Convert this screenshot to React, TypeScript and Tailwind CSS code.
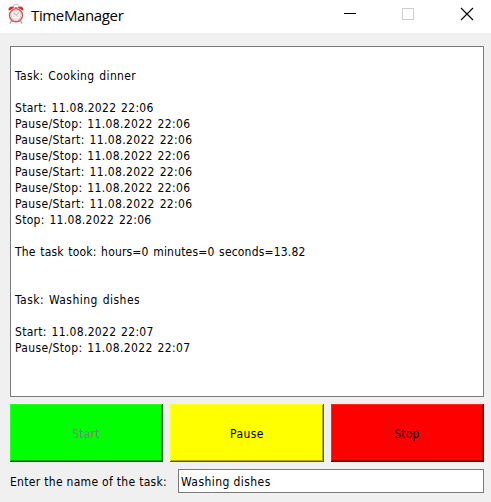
const LOG: { text: string; track: string }[] = [
  { text: '', track: '' },
  { text: 'Task: Cooking dinner', track: 'tracking-[0.36px]' },
  { text: '', track: '' },
  { text: 'Start: 11.08.2022 22:06', track: 'tracking-[0.3px]' },
  { text: 'Pause/Stop: 11.08.2022 22:06', track: 'tracking-[0.36px]' },
  { text: 'Pause/Start: 11.08.2022 22:06', track: 'tracking-[0.36px]' },
  { text: 'Pause/Stop: 11.08.2022 22:06', track: 'tracking-[0.36px]' },
  { text: 'Pause/Start: 11.08.2022 22:06', track: 'tracking-[0.36px]' },
  { text: 'Pause/Stop: 11.08.2022 22:06', track: 'tracking-[0.36px]' },
  { text: 'Pause/Start: 11.08.2022 22:06', track: 'tracking-[0.36px]' },
  { text: 'Stop: 11.08.2022 22:06', track: 'tracking-[0.3px]' },
  { text: '', track: '' },
  { text: 'The task took: hours=0 minutes=0 seconds=13.82', track: 'tracking-[0.18px]' },
  { text: '', track: '' },
  { text: '', track: '' },
  { text: 'Task: Washing dishes', track: 'tracking-[0.46px]' },
  { text: '', track: '' },
  { text: 'Start: 11.08.2022 22:07', track: 'tracking-[0.3px]' },
  { text: 'Pause/Stop: 11.08.2022 22:07', track: 'tracking-[0.36px]' },
];

function AlarmClock() {
  return (
    <svg width="16" height="20" viewBox="0 0 16 20" fill="none">
      <path d="m3.6 16.2-1.4 3M12.4 16.2l1.4 3" stroke="#aaa6a6" strokeWidth="1.3" strokeLinecap="round" />
      <path d="M4.8 1.8C5.8 0.1 10.2 0.1 11.2 1.8" stroke="#c4bcbc" strokeWidth="1" />
      <path d="M0.4 6C0.2 3.2 3 1.4 6.8 3L1.8 6.6Z" fill="#d2302c" />
      <path d="M15.6 6c0.2-2.8-2.6-4.6-6.4-3l5 3.6Z" fill="#d2302c" />
      <path d="M8 3v2" stroke="#b84a46" strokeWidth="1.4" />
      <circle cx="8" cy="11.3" r="6.5" fill="#efeded" stroke="#cf5f5b" strokeWidth="1.5" />
      <circle cx="8" cy="11.3" r="5.2" stroke="#cfc8c8" strokeWidth="0.8" />
      <path d="M5.6 8.9 8 11.4l3.2-2.8" stroke="#9b9595" strokeWidth="0.8" />
    </svg>
  );
}

function TitleBar() {
  return (
    <header className="flex h-[33px] shrink-0 bg-white">
      <div className="pl-2 pt-1"><AlarmClock /></div>
      <h1 className="ml-[7px] mt-[5px] flex-1 font-['Open_Sans','Noto_Sans',sans-serif] text-[15px] leading-5 tracking-[-0.36px]">TimeManager</h1>
      <svg width="130" height="28" viewBox="0 0 130 28" fill="none" className="mr-[17px] shrink-0" shapeRendering="crispEdges">
        <path d="M0 13.5h12" stroke="#000" />
        <path d="M58.5 8.5h11v11h-11z" stroke="#ccc" />
        <path d="m117 8 12 12m0-12-12 12" stroke="#000" strokeWidth="1.1" shapeRendering="auto" />
      </svg>
    </header>
  );
}

export default function App() {
  return (
    <main className="flex h-[502px] w-[491px] flex-col overflow-hidden bg-[#f0f0f0] font-['DejaVu_Sans_Condensed','DejaVu_Sans',sans-serif] text-[12px] text-black">
      <TitleBar />
      <section className="ml-[10px] mt-[13px] h-[351px] w-[474px] shrink-0 border border-[#7a7a7a] bg-white pl-1 pt-[5px] [word-spacing:1px]">
        {LOG.map((line, i) => (
          <p key={i} className={`h-4 whitespace-pre leading-4 ${line.track}`}>{line.text}</p>
        ))}
      </section>
      <div className="ml-[10px] mt-[7px] flex h-[58px] shrink-0 gap-[7px]">
        <button className="w-[153px] border-b border-r border-[#006000] bg-[#00ff00] pt-0.5 tracking-[0.2px] text-[#808080] shadow-[inset_1px_1px_#24ff24,inset_-1px_-1px_#00a900]">Start</button>
        <button className="w-[154px] border-b border-r border-[#606000] bg-[#ffff00] pl-px pt-0.5 tracking-[0.45px] shadow-[inset_1px_1px_#ffff24,inset_-1px_-1px_#a9a900]">Pause</button>
        <button className="w-[153px] border-b border-r border-[#500000] bg-[#ff0000] pt-0.5 tracking-[0.2px] shadow-[inset_1px_1px_#ff2424,inset_-1px_-1px_#a90000]">Stop</button>
      </div>
      <div className="ml-[10px] mt-[7px] flex h-6 shrink-0">
        <label htmlFor="task" className="w-[168px] whitespace-nowrap pt-px leading-[25px] tracking-[0.3px]">Enter the name of the task:</label>
        <input id="task" defaultValue="Washing dishes" className="w-[306px] border border-[#7a7a7a] bg-white px-0.5 pt-0.5 tracking-[0.43px] outline-none" />
      </div>
    </main>
  );
}
